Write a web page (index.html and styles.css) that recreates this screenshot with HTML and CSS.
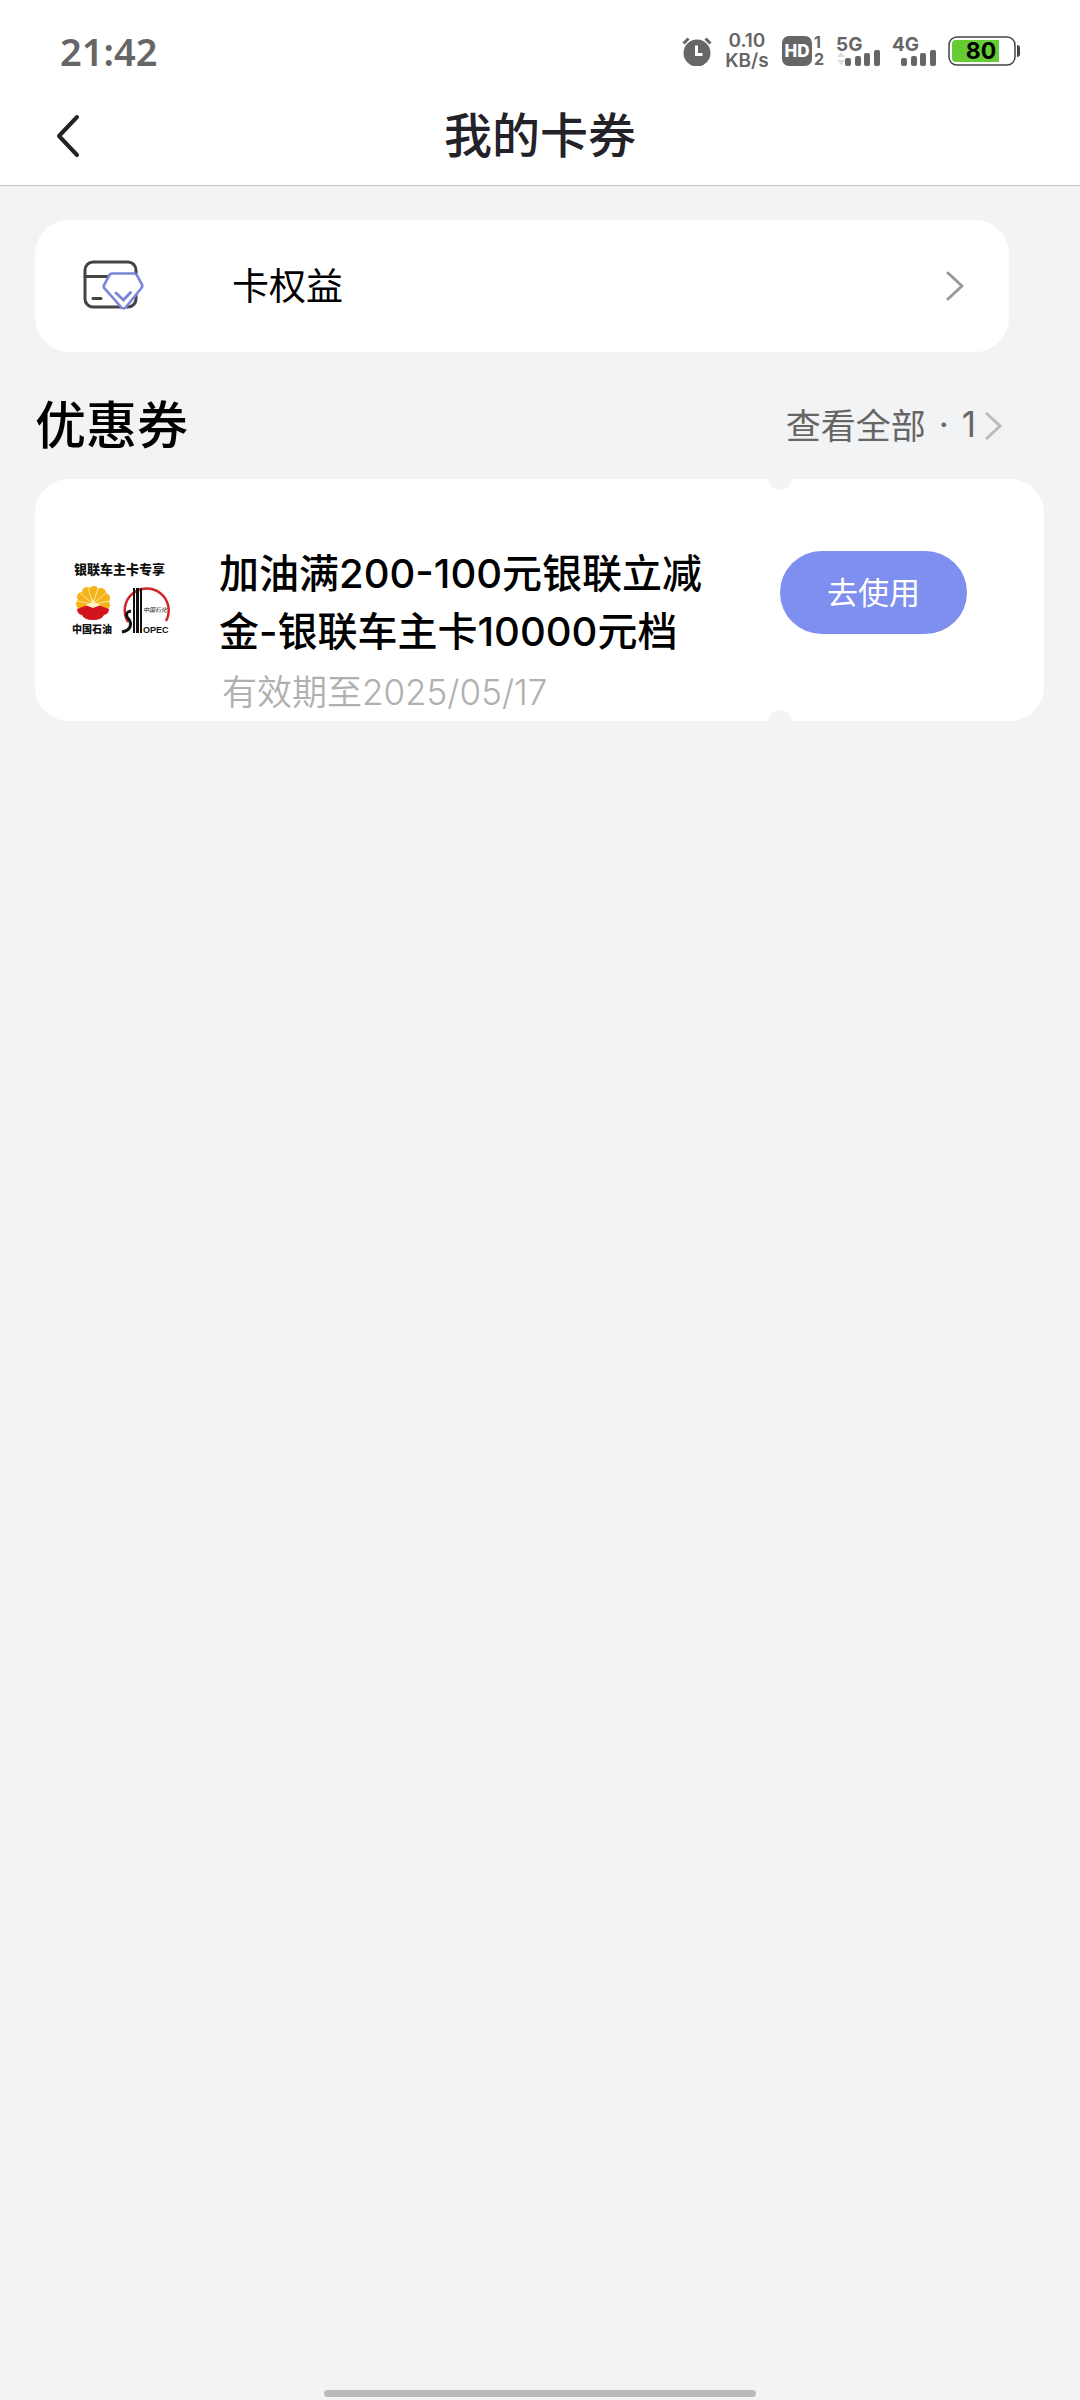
FILE: index.html
```
<!DOCTYPE html>
<html lang="zh-CN">
<head>
    <meta charset="utf-8">
    <meta name="viewport" content="width=device-width, initial-scale=1">
    <title>我的卡券</title>
    <link rel="stylesheet" href="styles.css">
</head>
<body>
    <header class="header">
        <div class="status">
            <span class="time">21:42</span>
            <div class="status-icons">
                <svg class="alarm" width="30" height="30" viewBox="0 0 30 30">
                    <circle cx="15" cy="17" r="13.5" fill="#666"/>
                    <path d="M1.5 7.5l5-5M28.500 7.500l-5-5" stroke="#666" stroke-width="3" fill="none"/>
                    <path d="M14.500 9.500v9h6" stroke="#fff" stroke-width="3" fill="none"/>
                </svg>
                <div class="speed"><span>0.10</span><span>KB/s</span></div>
                <div class="hd">
                    <span class="hd-box">HD</span>
                    <div class="hd-sim"><span>1</span><span>2</span></div>
                </div>
                <svg class="signal" width="44" height="40" viewBox="0 0 44 40">
                    <text class="net" x="0" y="20">5G</text>
                    <path d="M1 26l4-5 4 5zM1 29h8l-4 5z" fill="#ddd"/>
                    <g fill="#666">
                        <rect x="9" y="27" width="6" height="8" rx="2"/>
                        <rect x="19" y="25" width="6" height="10" rx="2"/>
                        <rect x="28" y="22" width="6" height="13" rx="2"/>
                        <rect x="38" y="19" width="6" height="16" rx="2"/>
                    </g>
                </svg>
                <svg class="signal" width="44" height="40" viewBox="0 0 44 40">
                    <text class="net" x="0" y="20">4G</text>
                    <g fill="#666">
                        <rect x="9" y="27" width="6" height="8" rx="2"/>
                        <rect x="19" y="25" width="6" height="10" rx="2"/>
                        <rect x="28" y="22" width="6" height="13" rx="2"/>
                        <rect x="38" y="19" width="6" height="16" rx="2"/>
                    </g>
                </svg>
                <svg class="battery" width="72" height="30" viewBox="0 0 72 30">
                    <rect x="1" y="1" width="66" height="28" rx="8" fill="#fff" stroke="#444" stroke-width="1.500"/>
                    <path d="M8 4h43v22H8q-4 0-4-4V8q0-4 4-4z" fill="#6c3"/>
                    <path d="M69 9q3 0 3 3v6q0 3-3 3z" fill="#444"/>
                    <text class="level" x="33" y="23" text-anchor="middle">80</text>
                </svg>
            </div>
        </div>
        <div class="nav">
            <button class="back" type="button" aria-label="返回">
                <svg width="24" height="44" viewBox="0 0 24 44">
                    <path d="M21 3L3 22l18 19" fill="none" stroke="#222228" stroke-width="4" stroke-linecap="round" stroke-linejoin="round"/>
                </svg>
            </button>
            <h1>我的卡券</h1>
        </div>
    </header>

    <main class="main">
        <a class="benefit" href="#">
            <svg width="62" height="52" viewBox="0 0 62 52">
                <rect x="2" y="2" width="51" height="45" rx="8" fill="none" stroke="#444" stroke-width="3"/>
                <path d="M2 16.500h24M10 38.500h8" fill="none" stroke="#444" stroke-width="3" stroke-linecap="round"/>
                <path d="M29 13.500h22q2 0 3 2l5 9q1 2-1 4L43 47q-2.500 3-5 0L22 29q-2-2-1-4l5-9q1-2.500 3-2.500z" fill="#fff" stroke="#7a85d8" stroke-width="2.600"/>
                <path d="M33 33l7.500 7 7-7.500" fill="none" stroke="#7a85d8" stroke-width="3" stroke-linecap="round"/>
            </svg>
            <span>卡权益</span>
            <svg width="18" height="30" viewBox="0 0 18 30">
                <path d="M2 2l14 13L2 28" fill="none" stroke="#999" stroke-width="3" stroke-linecap="round" stroke-linejoin="round"/>
            </svg>
        </a>

        <div class="section-head">
            <h2>优惠券</h2>
            <a class="all" href="#">
                <span>查看全部</span>
                <span class="dot">·</span>
                <span>1</span>
                <svg width="18" height="30" viewBox="0 0 18 30">
                    <path d="M2 2l14 13L2 28" fill="none" stroke="#bbb" stroke-width="3"/>
                </svg>
            </a>
        </div>

        <article class="coupon">
            <svg class="logo" width="106" height="104" viewBox="0 0 106 104">
                <text class="logo-title" x="6" y="25">银联车主卡专享</text>
                <!-- 中国石油 -->
                <g fill="#f6b21b">
                    <circle cx="13" cy="55" r="5"/><circle cx="14" cy="48" r="5"/>
                    <circle cx="19" cy="43" r="5"/><circle cx="26" cy="42" r="5"/>
                    <circle cx="33" cy="44" r="5"/><circle cx="37" cy="49" r="5"/>
                    <circle cx="37" cy="56" r="5"/><circle cx="25" cy="54" r="11"/>
                </g>
                <path d="M25 55L8 52M25 55L11 43M25 55L20 39M25 55L30 39M25 55L39 43M25 55L42 52" stroke="#fde79a" stroke-width="1"/>
                <path d="M25 54l16 6q0 5-5 6-2 5-11 5t-11-5q-5-1-5-6z" fill="#d2141c"/>
                <path d="M25 50l2 4 6 2-8 3-8-3 6-2z" fill="#fff3c4"/>
                <text class="logo-name" x="4" y="84">中国石油</text>
                <!-- 中国石化 -->
                <path d="M60 73A22 22 0 1 1 98 72" fill="none" stroke="#d0262c" stroke-width="2.500"/>
                <path d="M65 39h2v45h-2zM68 39h3v45h-3zM72 39h2v45h-2z" fill="#111"/>
                <path d="M63 62q-6 1-4 6 5 5 3 10-2 4-8 5" fill="none" stroke="#111" stroke-width="3"/>
                <text class="logo-script" x="75" y="63">中国石化</text>
                <text class="logo-opec" x="75" y="84">OPEC</text>
            </svg>
            <div class="info">
                <h3>加油满200-100元银联立减金-银联车主卡10000元档</h3>
                <p>有效期至2025/05/17</p>
            </div>
            <button class="use" type="button">去使用</button>
        </article>
    </main>

    <div class="home-bar"></div>
</body>
</html>
```
FILE: styles.css
```
* { box-sizing: border-box; }
body { margin: 0; min-height: 100vh; display: flex; flex-direction: column;
       background: #f2f3f5; color: #000;
       font-family: Inter, "Noto Sans CJK SC", sans-serif; }
h1, h2, h3, p { margin: 0; font-weight: 500; }
a { color: inherit; text-decoration: none; }
button { border: none; padding: 0; font-family: inherit; cursor: pointer; }
svg { display: block; flex: none; }

/* 顶部 */
.header { background: #fff; border-bottom: 1px solid #c8c8ca; }
.status { display: flex; justify-content: space-between; align-items: center;
          height: 86px; padding: 16px 60px 0; color: #666; }
.time { font-family: "Noto Sans", sans-serif; font-size: 38px; line-height: 40px; font-weight: 600; }
.status-icons { display: flex; align-items: center; gap: 12px; }
.speed { display: flex; flex-direction: column; align-items: center; width: 46px;
         font-size: 19px; line-height: 20px; font-weight: 600; }
.hd { display: flex; align-items: center; gap: 2px; }
.hd-box { width: 30px; height: 30px; border-radius: 7px; background: #666; color: #fff;
          font-size: 17px; line-height: 30px; font-weight: 800; text-align: center; }
.hd-sim { display: flex; flex-direction: column; font-size: 16px; line-height: 17px; font-weight: 700; }
.net { font-size: 19px; font-weight: 700; fill: #666; }
.level { font-size: 23px; font-weight: 700; fill: #000; }
.nav { display: grid; grid-template-columns: 1fr auto 1fr; align-items: center;
       height: 99px; padding: 0 56px; }
.nav h1 { font-size: 48px; line-height: 58px; color: #222228; }
.back { justify-self: start; background: none; }

/* 内容 */
.main { padding: 34px 36px 0 35px; }
.benefit { display: flex; align-items: center; height: 132px; margin-right: 35px; padding: 0 45px 0 48px;
           border-radius: 34px; background: #fff; font-size: 37px; }
.benefit span { flex: 1; margin-left: 87px; padding-bottom: 4px; }
.section-head { display: flex; justify-content: space-between; align-items: center;
                height: 127px; padding: 20px 42px 0 0; }
.section-head h2 { font-size: 51px; line-height: 58px; }
.all { display: flex; align-items: center; font-size: 35px; color: #666; }
.all span { padding-bottom: 4px; }
.all .dot { margin: 0 13px; }
.all svg { margin-left: 8px; }
.coupon { position: relative; display: flex; align-items: flex-start; padding: 66px 77px 0 33px;
          border-radius: 34px; background: #fff; overflow: hidden; }
/* 票券缺口 */
.coupon::before, .coupon::after { content: ""; position: absolute; right: 252px; width: 24px; height: 24px;
                                  border-radius: 12px; background: #f2f3f5; }
.coupon::before { top: -13px; }
.coupon::after { bottom: -13px; }
.logo { margin-top: 4px; }
.info { flex: 1; padding: 0 40px 0 45px; line-height: 58px; }
.info h3 { font-size: 40px; }
.info p { padding: 2px 0 0 3px; font-size: 35px; font-weight: 350; color: #b0b0b0; }
.use { width: 187px; height: 83px; margin-top: 6px; padding-bottom: 4px; border-radius: 42px;
       background: #7f8ff0; color: #fff; font-size: 31px; }
.logo text { font-family: "Noto Sans CJK SC", sans-serif; fill: #111; }
.logo .logo-title { font-size: 13px; font-weight: 900; }
.logo .logo-name { font-size: 10px; font-weight: 900; }
.logo .logo-script { font-size: 6px; font-style: italic; }
.logo .logo-opec { font-family: "Liberation Sans", sans-serif; font-size: 9px; font-weight: 700; }

.home-bar { width: 40%; height: 7px; margin: auto auto 3px; border-radius: 4px; background: #b8babc; }
```
